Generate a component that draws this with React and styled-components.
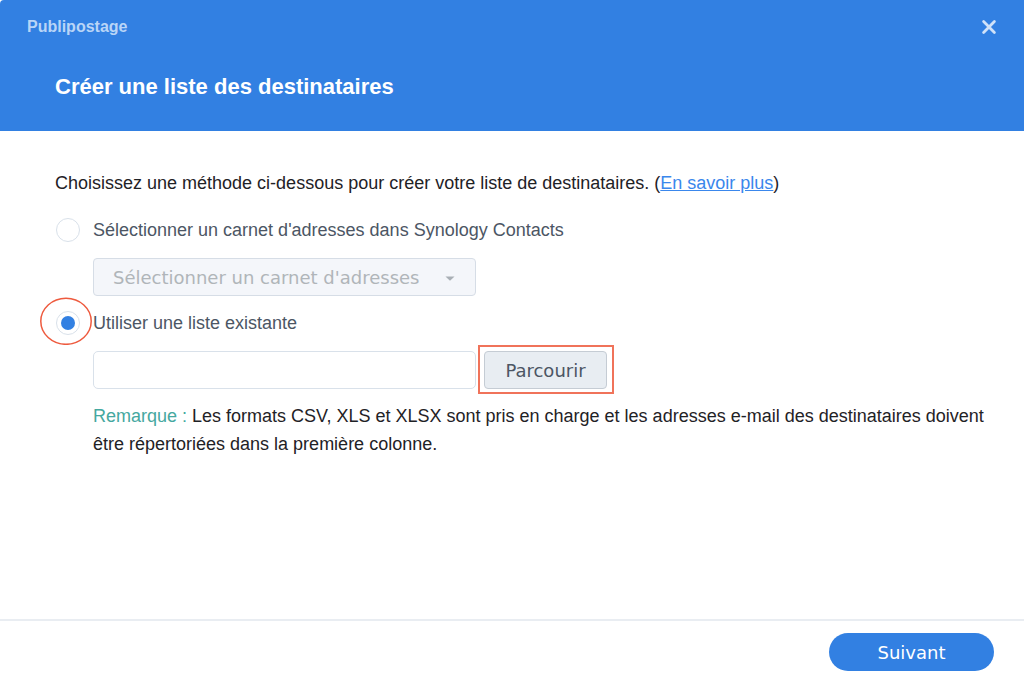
import React, { useRef, useState } from "react"
import styled, { createGlobalStyle } from "styled-components"

const GlobalStyle = createGlobalStyle`
* {
  box-sizing: border-box;
}

body {
  margin: 0;
  background-color: #ffffff;
  font-family: "Liberation Sans", Arial, sans-serif;
  font-size: 18px;
  line-height: 28px;
  color: #1f2226;
}
`

const Dialog = styled.div`
  display: flex;
  flex-direction: column;
  width: 100%;
  min-height: 100vh;
  border-radius: 4px 0 0 0;
  overflow: hidden;
`

const Header = styled.header`
  display: flex;
  flex-direction: column;
  gap: 32px;
  padding: 13px 27px 30px;
  background-color: #3280e2;
`

const TitleBar = styled.div`
  display: flex;
  justify-content: space-between;
  align-items: center;
`

const WindowTitle = styled.span`
  font-size: 16px;
  font-weight: bold;
  color: #b9d5f7;
`

const CloseButton = styled.button`
  display: flex;
  padding: 0;
  border: 0;
  background: none;
  color: #d0e2f9;
  cursor: pointer;
`

const StepTitle = styled.h1`
  margin: 0;
  padding-left: 28px;
  font-size: 22px;
  line-height: 28px;
  color: #ffffff;
`

const Content = styled.main`
  flex: 1;
  padding: 38px 40px 38px 55px;
`

const Intro = styled.p`
  margin: 0 0 19px;
`

const Link = styled.a`
  color: #3a87ec;
  text-decoration: underline;
`

const Option = styled.div`
  display: flex;
  align-items: center;
  gap: 13px;
  margin-bottom: 14px;
  padding-left: 1px;
`

const RadioHolder = styled.span`
  position: relative;
  display: flex;
`

const Radio = styled.input`
  appearance: none;
  display: grid;
  place-items: center;
  width: 24px;
  height: 24px;
  margin: 0;
  border: 1px solid #d9e1ea;
  border-radius: 50%;
  background-color: #ffffff;

  &:checked::before {
    content: "";
    width: 14px;
    height: 14px;
    border-radius: 50%;
    background-color: #3280e2;
  }
`

// marker around the selected radio
const RoundMark = styled.svg`
  position: absolute;
  top: -14px;
  left: -16px;
  pointer-events: none;
`

const OptionLabel = styled.label`
  color: #4c5664;
`

const FieldRow = styled.div`
  display: flex;
  gap: 8px;
  margin-bottom: 13px;
  padding-left: 38px;
`

const SelectBox = styled.div`
  position: relative;
  width: 383px;
  max-width: 100%;
`

const Select = styled.select`
  appearance: none;
  display: block;
  width: 100%;
  height: 38px;
  padding: 0 40px 0 19px;
  border: 1px solid #d6dde6;
  border-radius: 4px;
  background-color: #f4f6fa;
  font-family: "DejaVu Sans", Verdana, sans-serif;
  font-size: 18px;
  color: #b0b5b9;
  opacity: 1;
`

const Arrow = styled.svg`
  position: absolute;
  top: 18px;
  right: 21px;
  pointer-events: none;
`

const FileName = styled.input`
  flex: 0 1 383px;
  min-width: 0;
  height: 38px;
  padding: 0 12px;
  border: 1px solid #d9e1ea;
  border-radius: 5px;
  background-color: #ffffff;
  font-family: inherit;
  font-size: 18px;
  color: #4c5664;
`

const BrowseHolder = styled.div`
  position: relative;
`

const BrowseButton = styled.button`
  min-width: 123px;
  height: 38px;
  padding: 0 16px;
  border: 1px solid #c5ccd4;
  border-radius: 4px;
  background-color: #e8edf2;
  font-family: "DejaVu Sans", Verdana, sans-serif;
  font-size: 18px;
  color: #4c5664;
  cursor: pointer;
`

const SquareMark = styled.span`
  position: absolute;
  top: -6px;
  right: -7px;
  bottom: -5px;
  left: -6px;
  border: 2px solid #f0735a;
  pointer-events: none;
`

const Note = styled.p`
  margin: 0;
  padding-left: 38px;
`

const NoteTitle = styled.span`
  color: #45a8a0;
`

const Footer = styled.footer`
  display: flex;
  justify-content: flex-end;
  padding: 12px 30px 11px;
  border-top: 2px solid #e9edf2;
`

const NextButton = styled.button`
  min-width: 165px;
  height: 38px;
  border: 0;
  border-radius: 19px;
  background-color: #3280e2;
  font-family: "DejaVu Sans", Verdana, sans-serif;
  font-size: 18px;
  color: #ffffff;
  cursor: pointer;
`

const App = () => {
  const [method, setMethod] = useState("file")
  const [fileName, setFileName] = useState("")
  const fileInput = useRef(null)

  return (
    <>
      <GlobalStyle />
      <Dialog role="dialog" aria-labelledby="step-title">
        <Header>
          <TitleBar>
            <WindowTitle>Publipostage</WindowTitle>
            <CloseButton type="button" aria-label="Fermer">
              <svg width="16" height="16" viewBox="0 0 16 16" fill="none" stroke="currentColor" strokeWidth="2.8" strokeLinecap="round">
                <path d="M2.6 2.6 L13.4 13.4 M13.4 2.6 L2.6 13.4" />
              </svg>
            </CloseButton>
          </TitleBar>
          <StepTitle id="step-title">Créer une liste des destinataires</StepTitle>
        </Header>

        <Content>
          <Intro>
            Choisissez une méthode ci-dessous pour créer votre liste de destinataires. (<Link href="#aide">En savoir plus</Link>)
          </Intro>

          <Option>
            <RadioHolder>
              <Radio type="radio" id="book" name="method" checked={method === "book"} onChange={() => setMethod("book")} />
            </RadioHolder>
            <OptionLabel htmlFor="book">Sélectionner un carnet d'adresses dans Synology Contacts</OptionLabel>
          </Option>
          <FieldRow>
            <SelectBox>
              <Select aria-label="Carnet d'adresses" disabled={method !== "book"}>
                <option>Sélectionner un carnet d'adresses</option>
              </Select>
              <Arrow width="10" height="5" viewBox="0 0 10 5">
                <path d="M0.5 0.5 H9.5 L5 4.8 Z" fill="#a9afb5" />
              </Arrow>
            </SelectBox>
          </FieldRow>

          <Option>
            <RadioHolder>
              <Radio type="radio" id="file" name="method" checked={method === "file"} onChange={() => setMethod("file")} />
              <RoundMark width="52" height="48" viewBox="0 0 52 48" fill="none">
                <ellipse cx="26" cy="24.3" rx="25.2" ry="23" stroke="#ee5a3e" strokeWidth="1.5" />
              </RoundMark>
            </RadioHolder>
            <OptionLabel htmlFor="file">Utiliser une liste existante</OptionLabel>
          </Option>
          <FieldRow>
            <FileName type="text" aria-label="Fichier" value={fileName} readOnly />
            <BrowseHolder>
              <BrowseButton type="button" onClick={() => fileInput.current.click()}>Parcourir</BrowseButton>
              <SquareMark />
            </BrowseHolder>
            <input
              ref={fileInput}
              type="file"
              accept=".csv,.xls,.xlsx"
              hidden
              onChange={(e) => setFileName(e.target.files[0] ? e.target.files[0].name : "")}
            />
          </FieldRow>

          <Note>
            <NoteTitle>Remarque :</NoteTitle> Les formats CSV, XLS et XLSX sont pris en charge et les adresses e-mail des destinataires doivent être répertoriées dans la première colonne.
          </Note>
        </Content>

        <Footer>
          <NextButton type="button">Suivant</NextButton>
        </Footer>
      </Dialog>
    </>
  )
}

export default App
